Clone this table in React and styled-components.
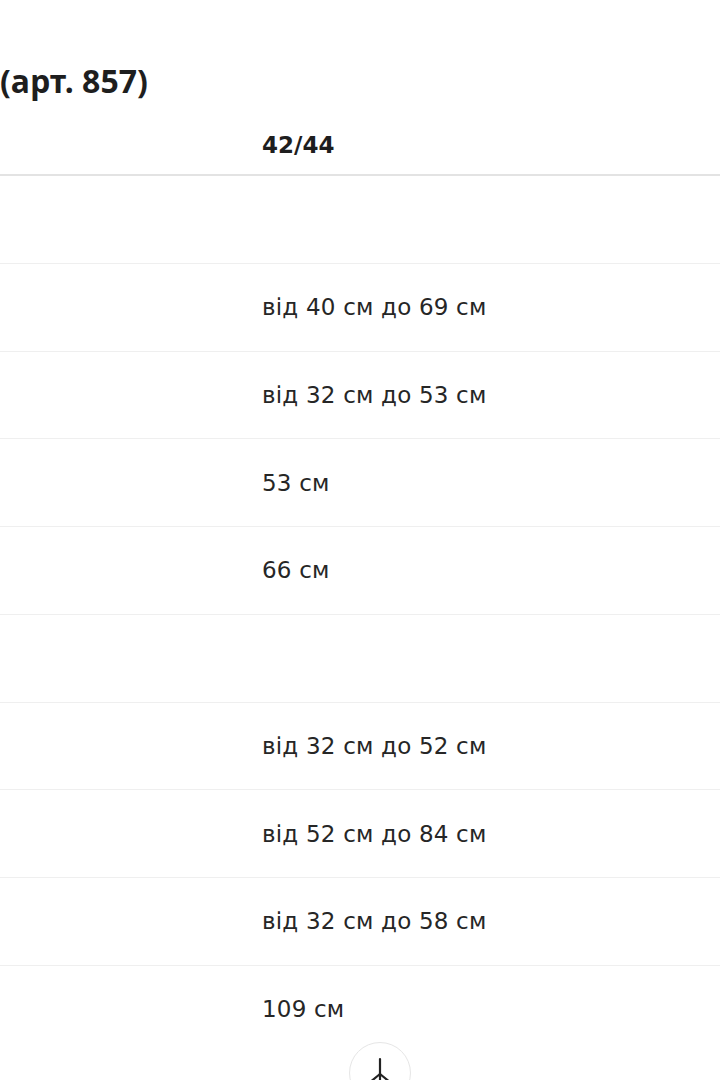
import React from "react";
import styled, { createGlobalStyle } from "styled-components";

const Global = createGlobalStyle`
  html, body { margin: 0; padding: 0; background: #ffffff; }
  body { font-family: "Noto Sans", "Open Sans", sans-serif; color: #222222; overflow: hidden; }
`;

const Page = styled.div`
  position: relative;
  width: 720px;
  height: 1080px;
  overflow: hidden;
  background: #fff;
`;

const Title = styled.h2`
  margin: 0;
  padding-top: 61px;
  height: 40px;
  line-height: 40px;
  font-size: 32px;
  font-weight: 700;
  color: #1e1e1e;
  white-space: nowrap;
`;

const Table = styled.div`
  margin-top: 15px;
  display: grid;
  grid-template-columns: 262px 1fr;
  font-family: "DejaVu Sans", "Noto Sans", sans-serif;
`;

const HeadRow = styled.div`
  display: contents;
`;

const HeadCell = styled.div`
  height: 58px;
  display: flex;
  align-items: center;
  font-size: 23px;
  font-weight: 700;
  color: #1e1e1e;
  border-bottom: 2px solid #e3e3e3;
`;

const Cell = styled.div`
  height: 86.75px;
  display: flex;
  align-items: center;
  font-size: 23px;
  letter-spacing: 0.2px;
  color: #262626;
  border-bottom: ${(p) => (p.$last ? "none" : "1px solid #efefef")};
  white-space: nowrap;
`;

const FloatButton = styled.button`
  position: absolute;
  left: 349px;
  top: 1042px;
  width: 62px;
  height: 62px;
  border-radius: 50%;
  border: 1px solid #e6e6e6;
  background: #fff;
  padding: 0;
  display: flex;
  align-items: flex-start;
  justify-content: center;
`;

const rows = [
  "",
  "від 40 см до 69 см",
  "від 32 см до 53 см",
  "53 см",
  "66 см",
  "",
  "від 32 см до 52 см",
  "від 52 см до 84 см",
  "від 32 см до 58 см",
  "109 см",
];

export default function App() {
  return (
    <Page>
      <Global />
      <Title>(арт. 857)</Title>
      <Table>
        <HeadRow>
          <HeadCell />
          <HeadCell>42/44</HeadCell>
        </HeadRow>
        {rows.map((r, i) => (
          <React.Fragment key={i}>
            <Cell $last={i === rows.length - 1} />
            <Cell $last={i === rows.length - 1}>{r}</Cell>
          </React.Fragment>
        ))}
      </Table>
      <FloatButton aria-label="menu">
        <svg width="40" height="40" viewBox="0 0 40 40" style={{ marginTop: 13 }}>
          <g stroke="#222" strokeWidth="2.2" strokeLinecap="round" fill="none">
            <line x1="20" y1="3" x2="20" y2="30" />
            <line x1="20" y1="18" x2="9" y2="27" />
            <line x1="20" y1="18" x2="31" y2="27" />
          </g>
        </svg>
      </FloatButton>
    </Page>
  );
}
